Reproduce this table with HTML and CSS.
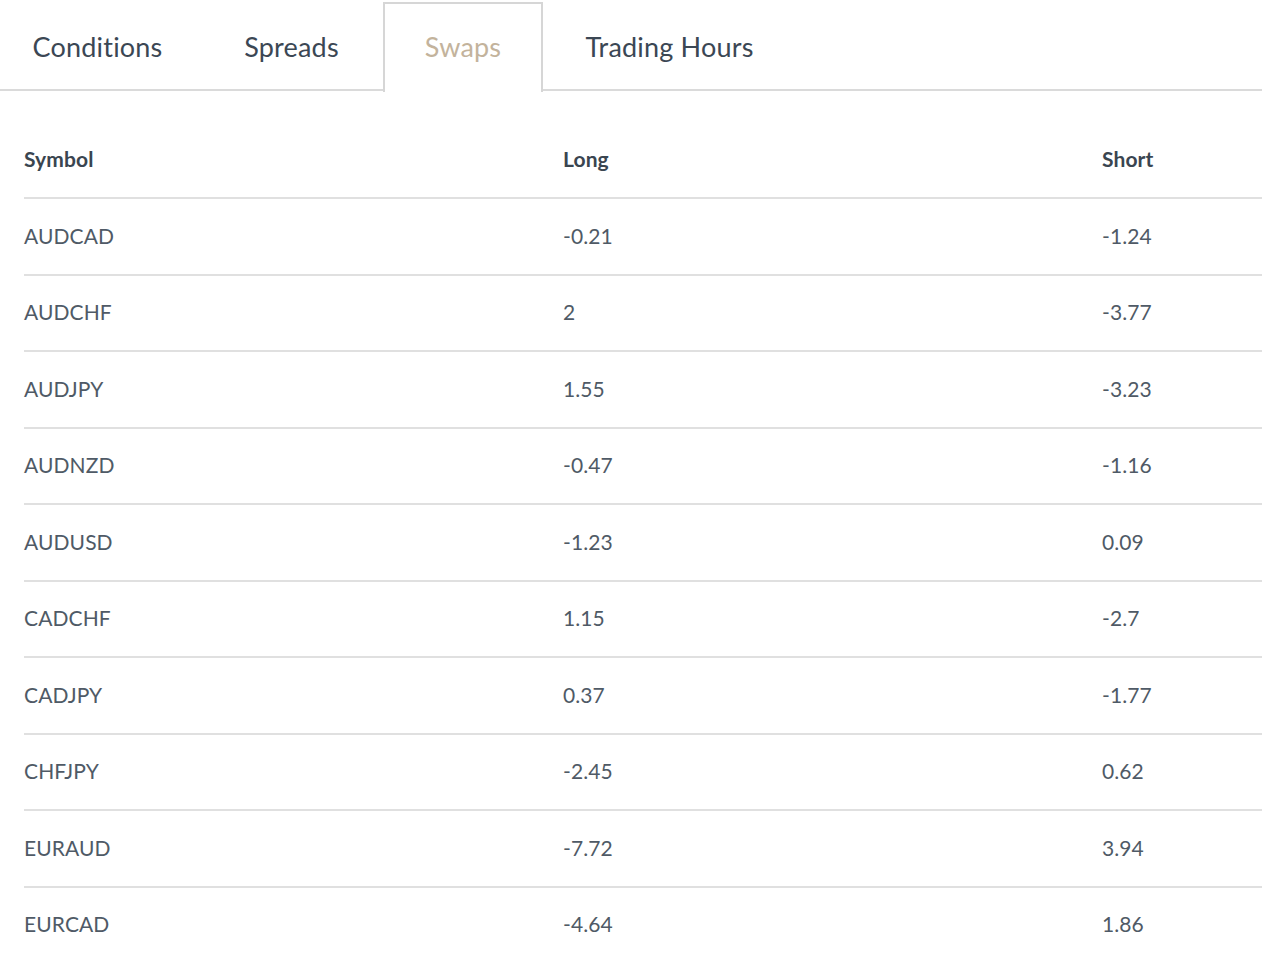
FILE: index.html
```html
<!DOCTYPE html>
<html lang="en">
<head>
<meta charset="utf-8">
<title>Swaps</title>
<link rel="stylesheet" href="styles.css">
</head>
<body>
<nav class="tabs">
  <div class="tab tab-conditions">Conditions</div>
  <div class="tab tab-spreads">Spreads</div>
  <div class="tab tab-swaps active">Swaps</div>
  <div class="tab tab-hours">Trading Hours</div>
</nav>
<section class="table">
  <div class="row head"><div class="c1">Symbol</div><div class="c2">Long</div><div class="c3">Short</div></div>
  <div class="row"><div class="c1">AUDCAD</div><div class="c2">-0.21</div><div class="c3">-1.24</div></div>
  <div class="row"><div class="c1">AUDCHF</div><div class="c2">2</div><div class="c3">-3.77</div></div>
  <div class="row"><div class="c1">AUDJPY</div><div class="c2">1.55</div><div class="c3">-3.23</div></div>
  <div class="row"><div class="c1">AUDNZD</div><div class="c2">-0.47</div><div class="c3">-1.16</div></div>
  <div class="row"><div class="c1">AUDUSD</div><div class="c2">-1.23</div><div class="c3">0.09</div></div>
  <div class="row"><div class="c1">CADCHF</div><div class="c2">1.15</div><div class="c3">-2.7</div></div>
  <div class="row"><div class="c1">CADJPY</div><div class="c2">0.37</div><div class="c3">-1.77</div></div>
  <div class="row"><div class="c1">CHFJPY</div><div class="c2">-2.45</div><div class="c3">0.62</div></div>
  <div class="row"><div class="c1">EURAUD</div><div class="c2">-7.72</div><div class="c3">3.94</div></div>
  <div class="row"><div class="c1">EURCAD</div><div class="c2">-4.64</div><div class="c3">1.86</div></div>
</section>
</body>
</html>
```

FILE: styles.css
```css
html, body {
  margin: 0;
  padding: 0;
  background: #ffffff;
}
body {
  font-family: "Lato", "Noto Sans", sans-serif;
  color: #4d5864;
  overflow: hidden;
}
.tabs {
  display: flex;
  gap: 4px;
  height: 89px;
  border-bottom: 2px solid #dadada;
}
.tab {
  box-sizing: border-box;
  margin-top: 2px;
  height: 89px;
  display: flex;
  align-items: center;
  justify-content: center;
  font-size: 27px;
  color: #3b4754;
  letter-spacing: 0.2px;
}
.tab-conditions { width: 195px; }
.tab-spreads { width: 175px; margin-left: 5px; }
.tab-swaps { width: 160px; }
.tab-hours { width: 245px; }
.tab.active {
  color: #c3b39c;
  background: #ffffff;
  border: 2px solid #d6d6d6;
  border-bottom: none;
  height: 90px;
  padding-bottom: 4px;
}
.table {
  margin-left: 24px;
  margin-top: 30px;
}
.row {
  box-sizing: border-box;
  display: flex;
  align-items: center;
  height: 76.5px;
  padding-bottom: 2px;
  border-bottom: 2px solid #e0e0e0;
  font-size: 21px;
  color: #4f5a66;
  letter-spacing: 0.1px;
}
.row.head {
  height: 78px;
  padding-bottom: 1px;
  font-weight: 700;
  font-size: 21px;
  color: #3a4550;
}
.c1, .c2 { width: 539px; flex: none; }
.c3 { flex: 1; }
```
